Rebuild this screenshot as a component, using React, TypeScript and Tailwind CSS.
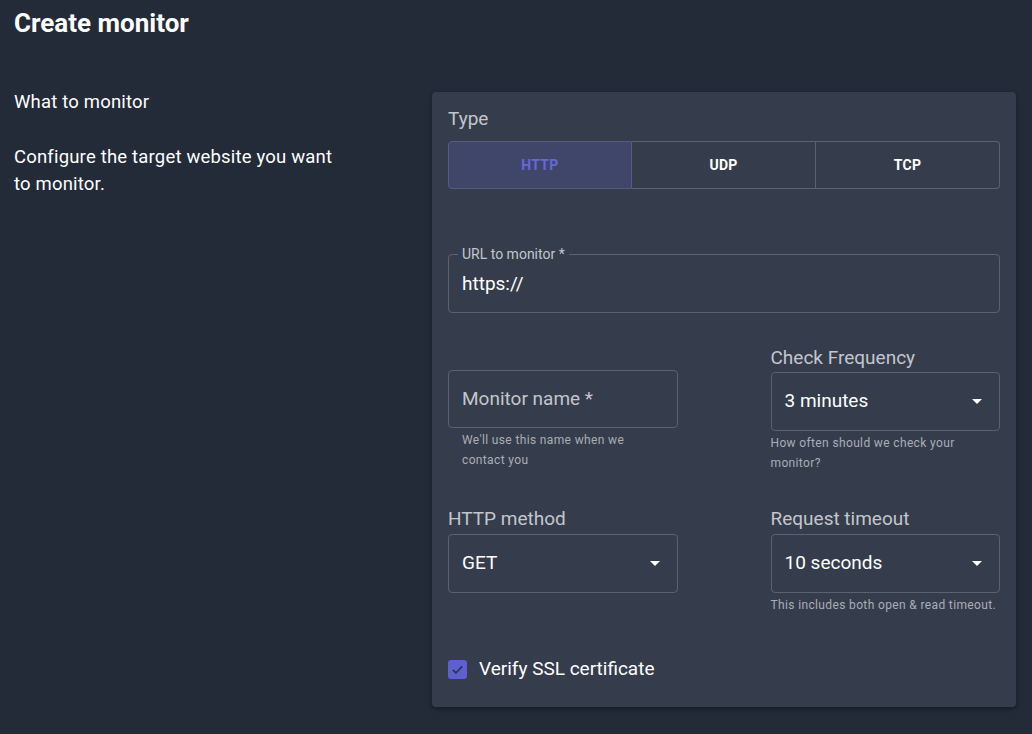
import React, { useState } from 'react';

const Caret: React.FC = () => (
    <svg width="10" height="5" viewBox="0 0 10 5" className="shrink-0">
        <path d="M0 0 L10 0 L5 5 Z" fill="#ffffff" />
    </svg>
);

const SelectBox: React.FC<{ value: string }> = ({ value }) => (
    <div className="flex h-[59px] items-center justify-between rounded border border-[#5a6170] pl-[13px] pr-[17px] text-[19px] text-white">
        <span>{value}</span>
        <Caret />
    </div>
);

const Helper: React.FC<{ children: React.ReactNode }> = ({ children }) => (
    <p className="mt-[2px] text-[12px] leading-[20px] tracking-[0.03em] text-[#a9aeb8]">{children}</p>
);

const Label: React.FC<{ children: React.ReactNode }> = ({ children }) => (
    <div className="text-[19px] leading-[22px] text-[#c3c6cd]">{children}</div>
);

const App: React.FC = () => {
    const [type, setType] = useState<string>('HTTP');
    const [verifySsl, setVerifySsl] = useState<boolean>(true);

    return (
        <div className="min-h-[734px] bg-[#232a38] pl-[14px] pr-4 pt-[7px] font-['Roboto',sans-serif] text-white">
            <h1 className="text-[26px] font-bold leading-[32px]">Create monitor</h1>

            <div className="mt-[51px] flex">
                <div className="w-[418px] shrink-0">
                    <div className="text-[18.5px] leading-[24px] tracking-[0.01em]">What to monitor</div>
                    <p className="mt-[30px] w-[332px] text-[18.5px] leading-[27px] tracking-[0.01em]">
                        Configure the target website you want to monitor.
                    </p>
                </div>

                {/* card with the form */}
                <div className="mt-[2px] flex-1 rounded bg-[#353c4b] px-4 pb-[23px] pt-4 shadow-[0_2px_4px_rgba(0,0,0,0.35)]">
                    <Label>Type</Label>
                    <div className="mt-[11px] grid h-[48px] grid-cols-3">
                        {['HTTP', 'UDP', 'TCP'].map((t, i) => (
                            <button
                                key={t}
                                onClick={() => setType(t)}
                                className={`text-[14px] font-bold tracking-[0.02em] ${
                                    i === 0 ? 'rounded-l' : i === 2 ? 'rounded-r border-l-0' : 'border-l-0'
                                } ${
                                    type === t
                                        ? 'border border-[#565c7e] bg-[#40466a] text-[#6468dc]'
                                        : 'border border-[#5a6170] text-white'
                                }`}
                            >
                                {t}
                            </button>
                        ))}
                    </div>

                    <fieldset className="mt-[57px] h-[67px] rounded border border-[#5a6170] pl-[9px]">
                        <legend className="px-[4px] text-[14px] leading-[16px] text-[#c3c6cd]">URL to monitor *</legend>
                        <div className="pl-[4px] pt-[8px] text-[19px] text-white">https://</div>
                    </fieldset>

                    <div className="mt-[34px] grid grid-cols-2 items-end gap-x-[93px]">
                        <div className="pb-[3px]">
                            <div className="flex h-[58px] items-center rounded border border-[#5a6170] pl-[13px] text-[19px] text-[#c3c6cd]">
                                Monitor name *
                            </div>
                            <div className="px-[14px]">
                                <Helper>We'll use this name when we contact you</Helper>
                            </div>
                        </div>
                        <div>
                            <Label>Check Frequency</Label>
                            <div className="mt-[3px]">
                                <SelectBox value="3 minutes" />
                            </div>
                            <Helper>How often should we check your monitor?</Helper>
                        </div>
                    </div>

                    <div className="mt-[35px] grid grid-cols-2 items-start gap-x-[93px]">
                        <div>
                            <Label>HTTP method</Label>
                            <div className="mt-[4px]">
                                <SelectBox value="GET" />
                            </div>
                        </div>
                        <div>
                            <Label>Request timeout</Label>
                            <div className="mt-[4px]">
                                <SelectBox value="10 seconds" />
                            </div>
                            <Helper>This includes both open &amp; read timeout.</Helper>
                        </div>
                    </div>

                    <label className="mt-[40px] flex cursor-pointer items-center gap-[12px]">
                        <span
                            onClick={() => setVerifySsl(!verifySsl)}
                            className={`flex h-[19px] w-[19px] items-center justify-center rounded-[3px] ${
                                verifySsl ? 'bg-[#5f5fd0]' : 'border-2 border-[#c3c6cd]'
                            }`}
                        >
                            {verifySsl && (
                                <svg width="15" height="15" viewBox="0 0 24 24">
                                    <path d="M4.5 12.5 L9.5 17.5 L19.5 7" fill="none" stroke="#2b3050" strokeWidth="2.6" />
                                </svg>
                            )}
                        </span>
                        <span className="text-[19px] text-white">Verify SSL certificate</span>
                    </label>
                </div>
            </div>
        </div>
    );
};

export default App;
